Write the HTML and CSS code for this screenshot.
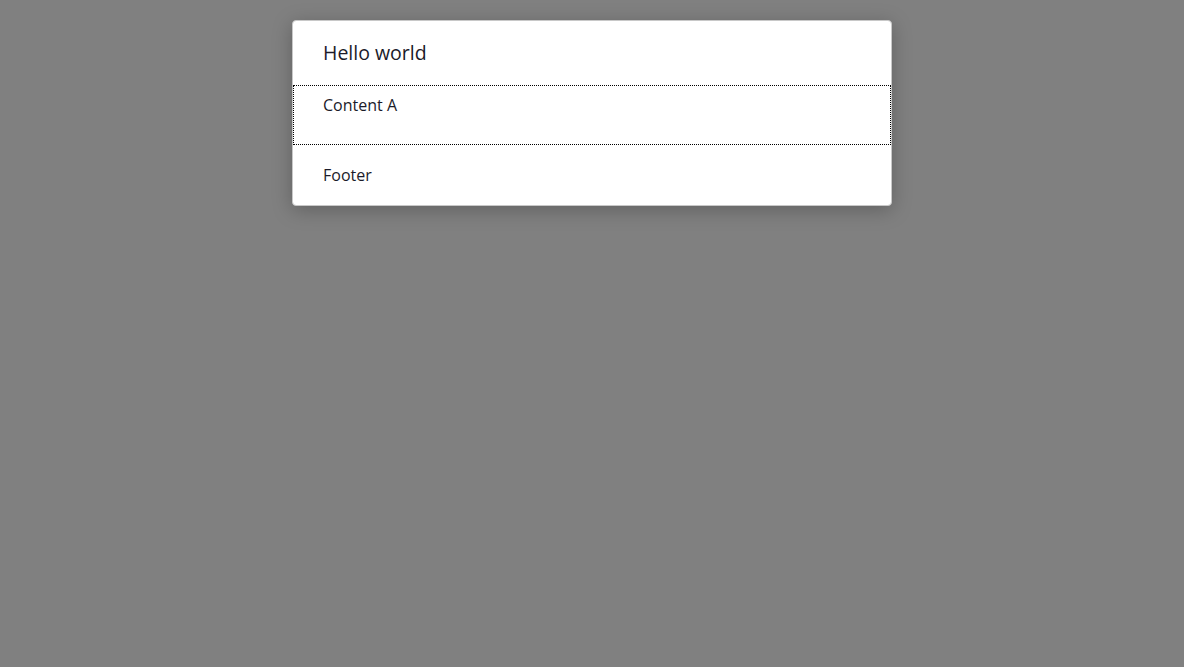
FILE: index.html
```html
<!DOCTYPE html>
<html>
<head>
<meta charset="utf-8">
<link rel="stylesheet" href="styles.css">
</head>
<body>
<div class="overlay">
  <div class="dialog">
    <div class="dialog-header">Hello world</div>
    <div class="dialog-body">Content A</div>
    <div class="dialog-footer">Footer</div>
  </div>
</div>
</body>
</html>
```
FILE: styles.css
```css
html, body {
  margin: 0;
  padding: 0;
  height: 100%;
}
body {
  background: #808080;
  font-family: "Open Sans", "Noto Sans", sans-serif;
  color: #1b1b2a;
}
.overlay {
  display: flex;
  justify-content: center;
  padding-top: 20px;
}
.dialog {
  width: 598px;
  background: #fff;
  border: 1px solid #c8c8c8;
  border-radius: 4px;
  box-shadow: 0 4px 20px rgba(0, 0, 0, 0.25);
}
.dialog-header {
  font-size: 19.5px;
  line-height: 28px;
  padding: 18px 30px 18px;
}
.dialog-body {
  font-size: 16px;
  line-height: 22px;
  padding: 9px 30px 29px;
  outline: 1px dotted #000;
  outline-offset: -1px;
}
.dialog-footer {
  font-size: 16px;
  line-height: 22px;
  padding: 19px 30px 19px;
}
```
